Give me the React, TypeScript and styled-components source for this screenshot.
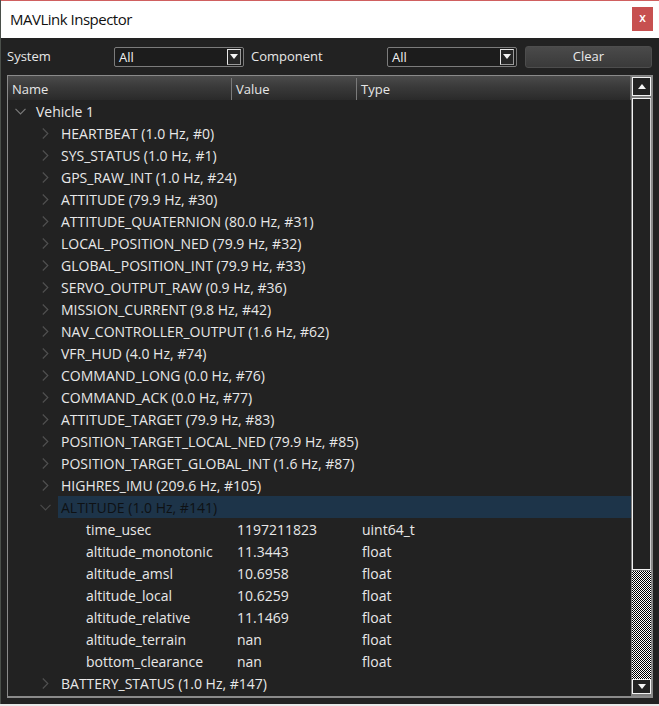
import React from "react";
import styled, { createGlobalStyle } from "styled-components";

const Global = createGlobalStyle`
  html, body { margin: 0; padding: 0; background: #e9e9e9; }
  body { font-family: "Open Sans", "Noto Sans", sans-serif; }
`;

const FONT = `"Open Sans", "Noto Sans", sans-serif`;

const Window = styled.div`
  width: 659px;
  height: 704px;
  display: flex;
  flex-direction: column;
  background: #222222;
  box-sizing: border-box;
  border-left: 1px solid #4a4f4a;
  overflow: hidden;
`;

const TitleBar = styled.div`
  height: 38px;
  flex: none;
  background: #ffffff;
  border-top: 1px solid #d06060;
  box-sizing: border-box;
  display: flex;
  align-items: center;
  padding: 0 6px 2px 9px;
`;

const Title = styled.div`
  flex: 1;
  font-family: ${FONT};
  font-size: 15px;
  color: #111;
  letter-spacing: -0.5px;
`;

const CloseButton = styled.div`
  width: 21px;
  height: 24px;
  background: #c75050;
  color: #fff;
  display: flex;
  align-items: center;
  justify-content: center;
  font-family: ${FONT};
  font-size: 12px;
  font-weight: 600;
  padding-bottom: 2px;
  box-sizing: border-box;
`;

const Toolbar = styled.div`
  height: 37px;
  flex: none;
  display: flex;
  align-items: center;
  padding: 0 6px 0 6px;
  box-sizing: border-box;
`;

const Label = styled.div<{ $w: number }>`
  width: ${(p) => p.$w}px;
  flex: none;
  font-family: ${FONT};
  font-size: 13px;
  color: #e8e8e8;
  padding-bottom: 1px;
`;

const Combo = styled.div`
  width: 130px;
  height: 20px;
  flex: none;
  box-sizing: border-box;
  border: 1px solid #7c7c7c;
  border-radius: 2px;
  background: #1c1c1c;
  display: flex;
  align-items: center;
  padding: 0 1px 0 4px;
  font-family: ${FONT};
  font-size: 13px;
  color: #f0f0f0;
`;

const ComboText = styled.span`
  flex: 1;
`;

const ArrowBox = styled.span`
  width: 14px;
  height: 16px;
  box-sizing: border-box;
  border: 1px solid #e8e8e8;
  border-right-color: #9a9a9a;
  border-bottom-color: #9a9a9a;
  background: #262626;
  display: flex;
  align-items: center;
  justify-content: center;
  margin-right: 1px;
`;

const Triangle = styled.span<{ $up?: boolean }>`
  width: 0;
  height: 0;
  border-left: 4px solid transparent;
  border-right: 4px solid transparent;
  ${(p) =>
    p.$up
      ? "border-bottom: 5px solid #f4f4f4;"
      : "border-top: 5px solid #f4f4f4;"}
`;

const Gap = styled.div<{ $w: number }>`
  width: ${(p) => p.$w}px;
  flex: none;
`;

const ClearButton = styled.div`
  flex: 1;
  height: 22px;
  box-sizing: border-box;
  border: 1px solid #4d4d4d;
  border-radius: 3px;
  background: linear-gradient(#4a4a4a, #3a3a3a);
  display: flex;
  align-items: center;
  justify-content: center;
  font-family: ${FONT};
  font-size: 13px;
  color: #eaeaea;
  margin-right: 1px;
  padding-bottom: 1px;
`;

const Panel = styled.div`
  margin: 0 6px 0 6px;
  height: 623px;
  flex: none;
  box-sizing: border-box;
  border: 1px solid #8a8a8a;
  border-right: 2px solid #8a8a8a;
  border-bottom: 2px solid #8a8a8a;
  display: flex;
`;

const Content = styled.div`
  flex: 1;
  display: flex;
  flex-direction: column;
  overflow: hidden;
`;

const Header = styled.div`
  height: 24px;
  flex: none;
  display: grid;
  grid-template-columns: 224px 125px 1fr;
  background: linear-gradient(#4b4b4b, #3a3a3a 45%, #2a2a2a);
  border-right: 1px solid #6a6a6a;
`;

const HeaderCell = styled.div<{ $divider?: boolean }>`
  display: flex;
  align-items: center;
  padding-left: 4px;
  font-family: ${FONT};
  font-size: 13px;
  color: #e6e6e6;
  border-right: ${(p) => (p.$divider ? "1px solid #7a7a7a" : "none")};
  margin: 2px 0 0;
  padding-bottom: 1px;
`;

const Row = styled.div<{ $indent: number }>`
  height: 22px;
  flex: none;
  display: flex;
  align-items: stretch;
  padding-left: ${(p) => p.$indent}px;
  font-family: ${FONT};
  font-size: 14px;
  color: #e8e8e8;
  white-space: nowrap;
`;

const Expander = styled.div`
  width: 25px;
  flex: none;
  display: flex;
  align-items: center;
  justify-content: center;
`;

const RowLabel = styled.div<{ $selected?: boolean }>`
  flex: 1;
  display: flex;
  align-items: center;
  padding-left: 3px;
  background: ${(p) => (p.$selected ? "#1d3449" : "transparent")};
  color: ${(p) => (p.$selected ? "#0e1114" : "inherit")};
`;

const FieldCells = styled.div`
  flex: 1;
  display: grid;
  grid-template-columns: 149px 125px 1fr;
  align-items: center;
`;

const FieldCell = styled.div<{ $pad: number }>`
  padding-left: ${(p) => p.$pad}px;
`;

const Scrollbar = styled.div`
  width: 20px;
  flex: none;
  background: #7d7d7d;
  display: flex;
  flex-direction: column;
  padding: 1px 0 2px 1px;
  box-sizing: border-box;
`;

const ScrollButton = styled.div<{ $h: number }>`
  height: ${(p) => p.$h}px;
  flex: none;
  box-sizing: border-box;
  border: 1px solid #f2f2f2;
  background: #222;
  display: flex;
  align-items: center;
  justify-content: center;
`;

const Thumb = styled.div`
  height: 472px;
  flex: none;
  margin-top: 2px;
  box-sizing: border-box;
  border: 1px solid #f2f2f2;
  border-right: 1px solid #cfcfcf;
  background: #222;
`;

const Track = styled.div`
  flex: 1;
  margin-top: 1px;
  background-image: repeating-conic-gradient(#000 0 25%, #fff 0 50%);
  background-size: 2px 2px;
`;

const ChevronDown = ({ color }: { color: string }) => (
  <svg width="11" height="7" viewBox="0 0 11 7">
    <polyline points="0.5,0.8 5.5,5.8 10.5,0.8" fill="none" stroke={color} strokeWidth="1.2" />
  </svg>
);

const ChevronRight = ({ color }: { color: string }) => (
  <svg width="7" height="11" viewBox="0 0 7 11">
    <polyline points="0.8,0.5 5.8,5.5 0.8,10.5" fill="none" stroke={color} strokeWidth="1.2" />
  </svg>
);

type Msg = { name: string; hz: string; id: number; open?: boolean };

const messages: Msg[] = [
  { name: "HEARTBEAT", hz: "1.0", id: 0 },
  { name: "SYS_STATUS", hz: "1.0", id: 1 },
  { name: "GPS_RAW_INT", hz: "1.0", id: 24 },
  { name: "ATTITUDE", hz: "79.9", id: 30 },
  { name: "ATTITUDE_QUATERNION", hz: "80.0", id: 31 },
  { name: "LOCAL_POSITION_NED", hz: "79.9", id: 32 },
  { name: "GLOBAL_POSITION_INT", hz: "79.9", id: 33 },
  { name: "SERVO_OUTPUT_RAW", hz: "0.9", id: 36 },
  { name: "MISSION_CURRENT", hz: "9.8", id: 42 },
  { name: "NAV_CONTROLLER_OUTPUT", hz: "1.6", id: 62 },
  { name: "VFR_HUD", hz: "4.0", id: 74 },
  { name: "COMMAND_LONG", hz: "0.0", id: 76 },
  { name: "COMMAND_ACK", hz: "0.0", id: 77 },
  { name: "ATTITUDE_TARGET", hz: "79.9", id: 83 },
  { name: "POSITION_TARGET_LOCAL_NED", hz: "79.9", id: 85 },
  { name: "POSITION_TARGET_GLOBAL_INT", hz: "1.6", id: 87 },
  { name: "HIGHRES_IMU", hz: "209.6", id: 105 },
  { name: "ALTITUDE", hz: "1.0", id: 141, open: true },
  { name: "BATTERY_STATUS", hz: "1.0", id: 147 },
];

const fields: [string, string, string][] = [
  ["time_usec", "1197211823", "uint64_t"],
  ["altitude_monotonic", "11.3443", "float"],
  ["altitude_amsl", "10.6958", "float"],
  ["altitude_local", "10.6259", "float"],
  ["altitude_relative", "11.1469", "float"],
  ["altitude_terrain", "nan", "float"],
  ["bottom_clearance", "nan", "float"],
];

export default function App() {
  return (
    <>
      <Global />
      <Window>
        <TitleBar>
          <Title>MAVLink Inspector</Title>
          <CloseButton>x</CloseButton>
        </TitleBar>
        <Toolbar>
          <Label $w={107}>System</Label>
          <Combo>
            <ComboText>All</ComboText>
            <ArrowBox>
              <Triangle />
            </ArrowBox>
          </Combo>
          <Gap $w={7} />
          <Label $w={136}>Component</Label>
          <Combo>
            <ComboText>All</ComboText>
            <ArrowBox>
              <Triangle />
            </ArrowBox>
          </Combo>
          <Gap $w={8} />
          <ClearButton>Clear</ClearButton>
        </Toolbar>
        <Panel>
          <Content>
            <Header>
              <HeaderCell $divider>Name</HeaderCell>
              <HeaderCell $divider>Value</HeaderCell>
              <HeaderCell>Type</HeaderCell>
            </Header>
            <Row $indent={0}>
              <Expander>
                <ChevronDown color="#7a7a7a" />
              </Expander>
              <RowLabel>Vehicle 1</RowLabel>
            </Row>
            {messages.map((m) => (
              <React.Fragment key={m.id}>
                <Row $indent={25}>
                  <Expander>
                    {m.open ? <ChevronDown color="#4a4a4a" /> : <ChevronRight color="#505050" />}
                  </Expander>
                  <RowLabel $selected={m.open}>
                    {`${m.name} (${m.hz} Hz, #${m.id})`}
                  </RowLabel>
                </Row>
                {m.open &&
                  fields.map((f) => (
                    <Row $indent={75} key={f[0]}>
                      <FieldCells>
                        <FieldCell $pad={3}>{f[0]}</FieldCell>
                        <FieldCell $pad={5}>{f[1]}</FieldCell>
                        <FieldCell $pad={5}>{f[2]}</FieldCell>
                      </FieldCells>
                    </Row>
                  ))}
              </React.Fragment>
            ))}
          </Content>
          <Scrollbar>
            <ScrollButton $h={19}>
              <Triangle $up />
            </ScrollButton>
            <Thumb />
            <Track />
            <ScrollButton $h={15}>
              <Triangle />
            </ScrollButton>
          </Scrollbar>
        </Panel>
      </Window>
    </>
  );
}
